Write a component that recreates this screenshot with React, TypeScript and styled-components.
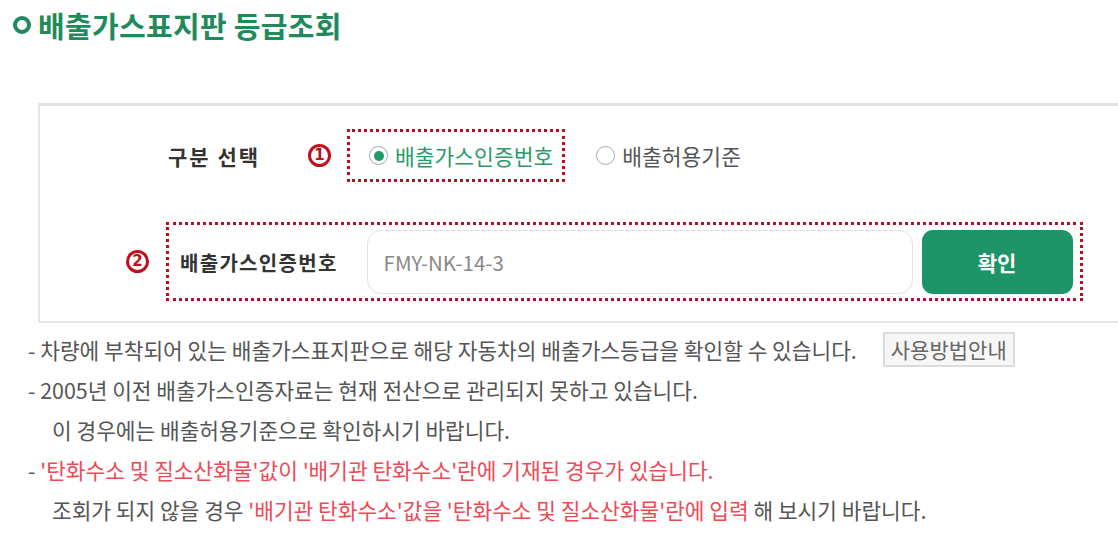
import React from "react";
import styled, { createGlobalStyle } from "styled-components";

const Global = createGlobalStyle`
  html, body { margin: 0; padding: 0; background: #fff; overflow: hidden; }
  body { font-family: "Noto Sans CJK KR", "Noto Sans", sans-serif; color: #555; }
  * { box-sizing: border-box; }
`;

const Page = styled.div`
  width: 1118px;
  height: 540px;
  padding: 11px 0 0 0;
  overflow: hidden;
`;

const TitleRow = styled.h1`
  margin: 0 0 0 13px;
  display: flex;
  align-items: center;
  gap: 7px;
  height: 28px;
  font-size: 29px;
  font-weight: 700;
  color: #1f8a5c;
  line-height: 28px;
  letter-spacing: 0.3px;
`;

const Ring = styled.span`
  width: 18px;
  height: 18px;
  border: 4.5px solid #1f8a5c;
  border-radius: 50%;
  flex: none;
`;

const Box = styled.div`
  margin: 64px 0 0 38px;
  width: 1110px;
  border: 2px solid #e6e6e6;
  border-top: 3px solid #e1e1e1;
  padding: 23px 0 20px 0;
  display: flex;
  flex-direction: column;
  gap: 40px;
`;

const Row = styled.div<{ $indent: number }>`
  display: flex;
  align-items: center;
  padding-left: ${(p) => p.$indent}px;
`;

const RowLabel = styled.span<{ $w?: number; $wide?: boolean }>`
  font-size: ${(p) => (p.$wide ? "21px" : "20px")};
  font-weight: 700;
  color: #333;
  letter-spacing: ${(p) => (p.$wide ? "2px" : "1.3px")};
  width: ${(p) => (p.$w ? `${p.$w}px` : "auto")};
  flex: none;
`;

const NumSlot = styled.span`
  width: 26px;
  flex: none;
  display: flex;
  align-items: center;
`;

const Num = styled.span`
  width: 23px;
  height: 23px;
  border: 3px solid #c0101e;
  border-radius: 50%;
  display: flex;
  align-items: center;
  justify-content: center;
  font-family: "DejaVu Sans", sans-serif;
  font-size: 15px;
  font-weight: 700;
  color: #c0101e;
  line-height: 1;
`;

const Dotted = styled.div<{ $pad: string }>`
  border: 3px dotted #b5102a;
  padding: ${(p) => p.$pad};
  display: flex;
  align-items: center;
`;

const RadioWrap = styled.label<{ $on?: boolean }>`
  display: flex;
  align-items: center;
  gap: 7px;
  font-size: 21.5px;
  color: ${(p) => (p.$on ? "#2a9a6c" : "#555")};
  height: 43px;
`;

const RadioDot = styled.span<{ $on?: boolean }>`
  width: 19px;
  height: 19px;
  border-radius: 50%;
  border: 1.5px solid ${(p) => (p.$on ? "#9aa" : "#aaa")};
  display: flex;
  align-items: center;
  justify-content: center;
  flex: none;
  &::after {
    content: "";
    width: 10px;
    height: 10px;
    border-radius: 50%;
    background: ${(p) => (p.$on ? "#1f9a6a" : "transparent")};
  }
`;

const Input = styled.div`
  width: 546px;
  height: 64px;
  border: 1.5px solid #e2e2e2;
  border-radius: 14px;
  display: flex;
  align-items: center;
  padding-left: 16px;
  font-size: 20.5px;
  color: #8a8a8a;
  margin-left: 29px;
`;

const OkButton = styled.button`
  width: 151px;
  height: 64px;
  margin-left: 9px;
  border: none;
  border-radius: 11px;
  background: #1e9568;
  color: #fff;
  font-family: inherit;
  font-size: 21px;
  font-weight: 700;
`;

const Notes = styled.div`
  margin-top: 6px;
  padding-left: 28px;
  display: flex;
  flex-direction: column;
`;

const Line = styled.div<{ $indent?: boolean }>`
  height: 40px;
  display: flex;
  align-items: center;
  font-size: 21.4px;
  color: #555;
  white-space: pre;
  padding-left: ${(p) => (p.$indent ? "24px" : "0")};
`;

const Red = styled.span`
  color: #ee4a55;
`;

const GuideButton = styled.span`
  margin-left: 26px;
  height: 35px;
  padding: 0 6px;
  display: flex;
  align-items: center;
  border: 2px solid #dcdcdc;
  background: #f7f7f7;
  color: #666;
  font-size: 21px;
`;

export default function App() {
  return (
    <Page>
      <Global />
      <TitleRow>
        <Ring />
        배출가스표지판 등급조회
      </TitleRow>
      <Box>
        <Row $indent={128}>
          <RowLabel $w={140} $wide>구분 선택</RowLabel>
          <NumSlot>
            <Num>1</Num>
          </NumSlot>
          <Dotted $pad="2px 9px 2px 19px" style={{ marginLeft: 13 }}>
            <RadioWrap $on>
              <RadioDot $on />
              배출가스인증번호
            </RadioWrap>
          </Dotted>
          <RadioWrap style={{ marginLeft: 31 }}>
            <RadioDot />
            배출허용기준
          </RadioWrap>
        </Row>
        <Row $indent={86}>
          <NumSlot>
            <Num>2</Num>
          </NumSlot>
          <Dotted $pad="5px 7px 4px 11px" style={{ marginLeft: 14 }}>
            <RowLabel>배출가스인증번호</RowLabel>
            <Input>FMY-NK-14-3</Input>
            <OkButton>확인</OkButton>
          </Dotted>
        </Row>
      </Box>
      <Notes>
        <Line>
          - 차량에 부착되어 있는 배출가스표지판으로 해당 자동차의 배출가스등급을 확인할 수 있습니다.
          <GuideButton>사용방법안내</GuideButton>
        </Line>
        <Line>- 2005년 이전 배출가스인증자료는 현재 전산으로 관리되지 못하고 있습니다.</Line>
        <Line $indent>이 경우에는 배출허용기준으로 확인하시기 바랍니다.</Line>
        <Line>
          - <Red>'탄화수소 및 질소산화물'값이 '배기관 탄화수소'란에 기재된 경우가 있습니다.</Red>
        </Line>
        <Line $indent>
          조회가 되지 않을 경우 <Red>'배기관 탄화수소'값을 '탄화수소 및 질소산화물'란에 입력</Red> 해 보시기 바랍니다.
        </Line>
      </Notes>
    </Page>
  );
}
